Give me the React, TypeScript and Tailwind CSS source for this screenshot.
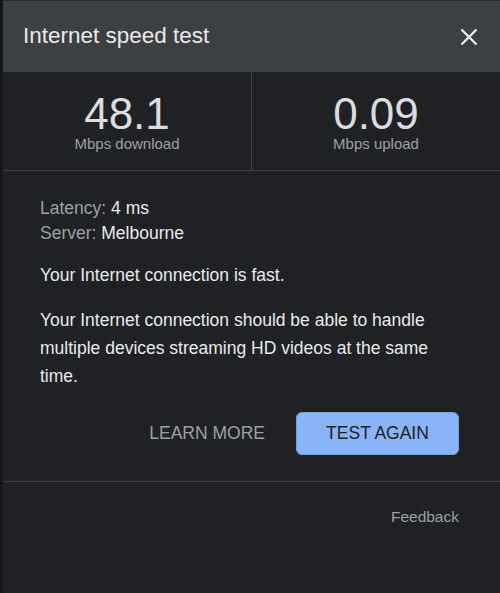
import React from 'react';

const font = { fontFamily: '"Liberation Sans", Arial, sans-serif' };

export default function App() {
  return (
    <div className="min-h-[593px] bg-[#161616] pl-[3px] flex" style={font}>
      <div className="flex-1 bg-[#202124] border-t border-[#2a2b2d] min-h-[592px] flex flex-col">
        {/* header */}
        <div className="h-[71px] bg-[#3c4043] flex items-center justify-between pl-[20px] pr-[22px]">
          <h1 className="text-[22.5px] text-[#e8eaed] leading-none">Internet speed test</h1>
          <svg width="18" height="18" viewBox="0 0 18 18" className="text-[#e8eaed]">
            <path d="M1.5 1.5 L16.5 16.5 M16.5 1.5 L1.5 16.5" stroke="currentColor" strokeWidth="2.4" />
          </svg>
        </div>

        {/* speeds */}
        <div className="grid grid-cols-[249px_1fr] border-b border-[#3c4043]">
          <div className="h-[98px] pt-[21px] flex flex-col items-center border-r border-[#3c4043]">
            <span className="text-[44px] leading-[42px] text-[#dadce0]">48.1</span>
            <span className="text-[15px] leading-[18px] text-[#9aa0a6]">Mbps download</span>
          </div>
          <div className="h-[98px] pt-[21px] flex flex-col items-center">
            <span className="text-[44px] leading-[42px] text-[#dadce0]">0.09</span>
            <span className="text-[15px] leading-[18px] text-[#9aa0a6]">Mbps upload</span>
          </div>
        </div>

        {/* details */}
        <div className="pl-[37px] pr-[41px] pt-[25px] pb-[26px] border-b border-[#3c4043] text-[17.5px] text-[#e8eaed]">
          <div className="leading-[25px]">
            <p><span className="text-[#9aa0a6]">Latency: </span>4 ms</p>
            <p><span className="text-[#9aa0a6]">Server: </span>Melbourne</p>
          </div>
          <p className="leading-[28px] mt-[15px]">Your Internet connection is fast.</p>
          <p className="leading-[28px] mt-[17px] pr-[10px]">
            Your Internet connection should be able to handle multiple devices streaming HD videos at the same time.
          </p>
          <div className="flex justify-end items-center gap-[31px] mt-[22px]">
            <button className="text-[17.5px] text-[#9aa0a6] leading-none">LEARN MORE</button>
            <button className="w-[163px] h-[43px] rounded-[6px] bg-[#8ab4f8] border border-[#7a9fd9] text-[17.5px] text-[#202124] leading-none">
              TEST AGAIN
            </button>
          </div>
        </div>

        {/* footer */}
        <div className="pt-[25px] pr-[41px] flex justify-end">
          <span className="text-[15.5px] leading-[20px] text-[#9aa0a6]">Feedback</span>
        </div>
      </div>
    </div>
  );
}
